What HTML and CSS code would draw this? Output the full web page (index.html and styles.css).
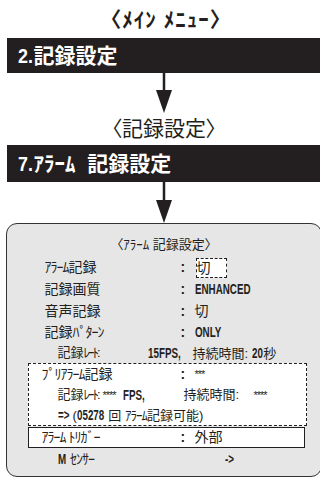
FILE: index.html
```html
<!DOCTYPE html>
<html lang="ja">
<head>
  <meta charset="UTF-8" />
  <meta name="viewport" content="width=device-width, initial-scale=1.0" />
  <title>アラーム記録設定</title>
  <link rel="stylesheet" href="styles.css">
</head>
<body>

  <div class="page">
    <div class="menu-title">〈ﾒｲﾝ ﾒﾆｭｰ〉</div>
    <div class="bar"><span class="bar-num">2.</span>記録設定</div>
    <div class="arrow">
      <svg width="16" height="40" viewBox="0 0 16 40"><path d="M8 0V18" stroke="#231f20" stroke-width="2.5"/><path d="M0 17H16L8 40Z" fill="#231f20"/></svg>
    </div>
    <div class="sub-title">〈記録設定〉</div>
    <div class="bar bar-tall"><span class="bar-num">7.</span>ｱﾗｰﾑ&nbsp; 記録設定</div>
    <div class="arrow arrow-long">
      <svg width="16" height="41" viewBox="0 0 16 41"><path d="M8 0V19" stroke="#231f20" stroke-width="2.5"/><path d="M0 18H16L8 41Z" fill="#231f20"/></svg>
    </div>

    <div class="panel">
      <div class="panel-title">〈ｱﾗｰﾑ 記録設定〉</div>

      <div class="row"><span><span class="hw">ｱﾗｰﾑ</span>記録</span><span class="colon">:</span><span><span class="cursor">切</span></span></div>
      <div class="row"><span>記録画質</span><span class="colon">:</span><span class="en">ENHANCED</span></div>
      <div class="row"><span>音声記録</span><span class="colon">:</span><span>切</span></div>
      <div class="row row-21"><span>記録<span class="hw">ﾊﾟﾀｰﾝ</span></span><span class="colon">:</span><span class="en">ONLY</span></div>
      <div class="rate rate-first"><span>記録<span class="hw">ﾚｰﾄ</span>:</span><span class="en">15FPS,</span><span>持続時間: <span class="en en-20">20</span>秒</span></div>

      <div class="pre-box">
        <div class="row row-pre"><span><span class="hw">ﾌﾟﾘｱﾗｰﾑ</span>記録</span><span class="colon">:</span><span class="en stars">***</span></div>
        <div class="rate rate-second"><span>記録<span class="hw">ﾚｰﾄ</span>:</span><span class="en stars">****</span><span class="en">FPS,</span><span>持続時間:</span><span class="en stars">****</span></div>
        <div class="note"><span class="en en-arrow">=&gt;</span> (<span class="en en-count">05278</span> 回 <span class="hw">ｱﾗｰﾑ</span>記録可能)</div>
      </div>

      <div class="row row-trigger"><span><span class="hw">ｱﾗｰﾑ ﾄﾘｶﾞｰ</span></span><span class="colon">:</span><span>外部</span></div>
      <div class="row row-sensor"><span><span class="en en-m">M</span> <span class="hw">ｾﾝｻｰ</span></span><span class="en">-&gt;</span></div>
    </div>
  </div>

</body>
</html>
```

FILE: styles.css
```css
body {
  margin: 0;
  overflow: hidden;
  background: #fff;
  color: #231f20;
  font-family: "Liberation Sans", "Noto Sans CJK JP", sans-serif;
}

.page {
  margin-left: 7px;
  width: 314px;
}

.menu-title {
  height: 38px;
  line-height: 40px;
  padding-left: 4px;
  text-align: center;
  font-size: 21px;
  font-weight: bold;
  letter-spacing: 1px;
  white-space: pre;
}

.bar {
  height: 35px;
  line-height: 35px;
  padding-left: 11px;
  background: #231f20;
  color: #fff;
  font-size: 21px;
  font-weight: bold;
  white-space: nowrap;
}

.bar-num {
  display: inline-block;
  margin-right: -2px;
  transform: scaleX(.85);
  transform-origin: 0 50%;
}

.bar-tall {
  height: 37px;
  line-height: 37px;
}

.arrow {
  height: 40px;
  display: flex;
  justify-content: center;
}

.arrow svg {
  display: block;
}

.arrow-long {
  height: 41px;
}

.sub-title {
  height: 32px;
  line-height: 32px;
  text-align: center;
  font-size: 21px;
  font-feature-settings: "palt";
}

.panel {
  box-sizing: border-box;
  margin-left: -1px;
  width: 316px;
  height: 254px;
  padding-top: 10px;
  background: #e6e6e6;
  border: 1.5px solid #333;
  border-radius: 11px;
  font-size: 14px;
  white-space: nowrap;
}

.panel-title {
  height: 22px;
  line-height: 22px;
  text-align: center;
  font-size: 13px;
  font-feature-settings: "palt";
}

.row {
  display: grid;
  grid-template-columns: 136px 14px 1fr;
  height: 22px;
  line-height: 22px;
  padding-left: 37.5px;
}

.row-21 {
  height: 21px;
  line-height: 21px;
}

.colon {
  font-weight: bold;
}

/* condensed bold latin */
.en {
  display: inline-block;
  font-weight: bold;
  font-size: 14px;
  transform: scaleX(.7);
  transform-origin: 0 50%;
}

.en-20 {
  margin-right: -4px;
}

.en-count {
  margin-right: -11px;
}

.en-arrow {
  margin-right: -5px;
}

.en-m {
  margin-right: -3px;
}

.stars {
  font-weight: normal;
  font-size: 11px;
  letter-spacing: -1px;
  transform: none;
}

.hw {
  letter-spacing: -1px;
}

.cursor {
  display: inline-block;
  box-sizing: border-box;
  width: 31px;
  height: 20px;
  line-height: 18px;
  margin-left: 1px;
  background: #fff;
  border: 1px dashed #231f20;
  vertical-align: middle;
}

.rate {
  display: grid;
  height: 20px;
  line-height: 20px;
  font-size: 13px;
}

.rate .hw {
  letter-spacing: -2px;
}

.rate-first {
  grid-template-columns: 90px 45px 1fr;
  padding-left: 50.5px;
}

.pre-box {
  margin-left: 20.5px;
  width: 277px;
  background: #fff;
  border: 1px dashed #231f20;
}

.row-pre {
  grid-template-columns: 139px 14px 1fr;
  padding-left: 13px;
  height: 21px;
  line-height: 21px;
}

.rate-second {
  grid-template-columns: 45px 20px 61px 70px 1fr;
  padding-left: 29px;
}

.note {
  height: 20px;
  line-height: 20px;
  padding-left: 29px;
  font-size: 13px;
}

.row-trigger {
  box-sizing: border-box;
  margin: 1px 0 0 20.5px;
  width: 277px;
  height: 21px;
  line-height: 18px;
  padding-left: 13px;
  grid-template-columns: 139px 14px 1fr;
  background: #fff;
  border: 1.5px solid #231f20;
}

.row-sensor {
  height: 22px;
  line-height: 22px;
  padding-left: 50.5px;
  grid-template-columns: 167px 1fr;
}
```
